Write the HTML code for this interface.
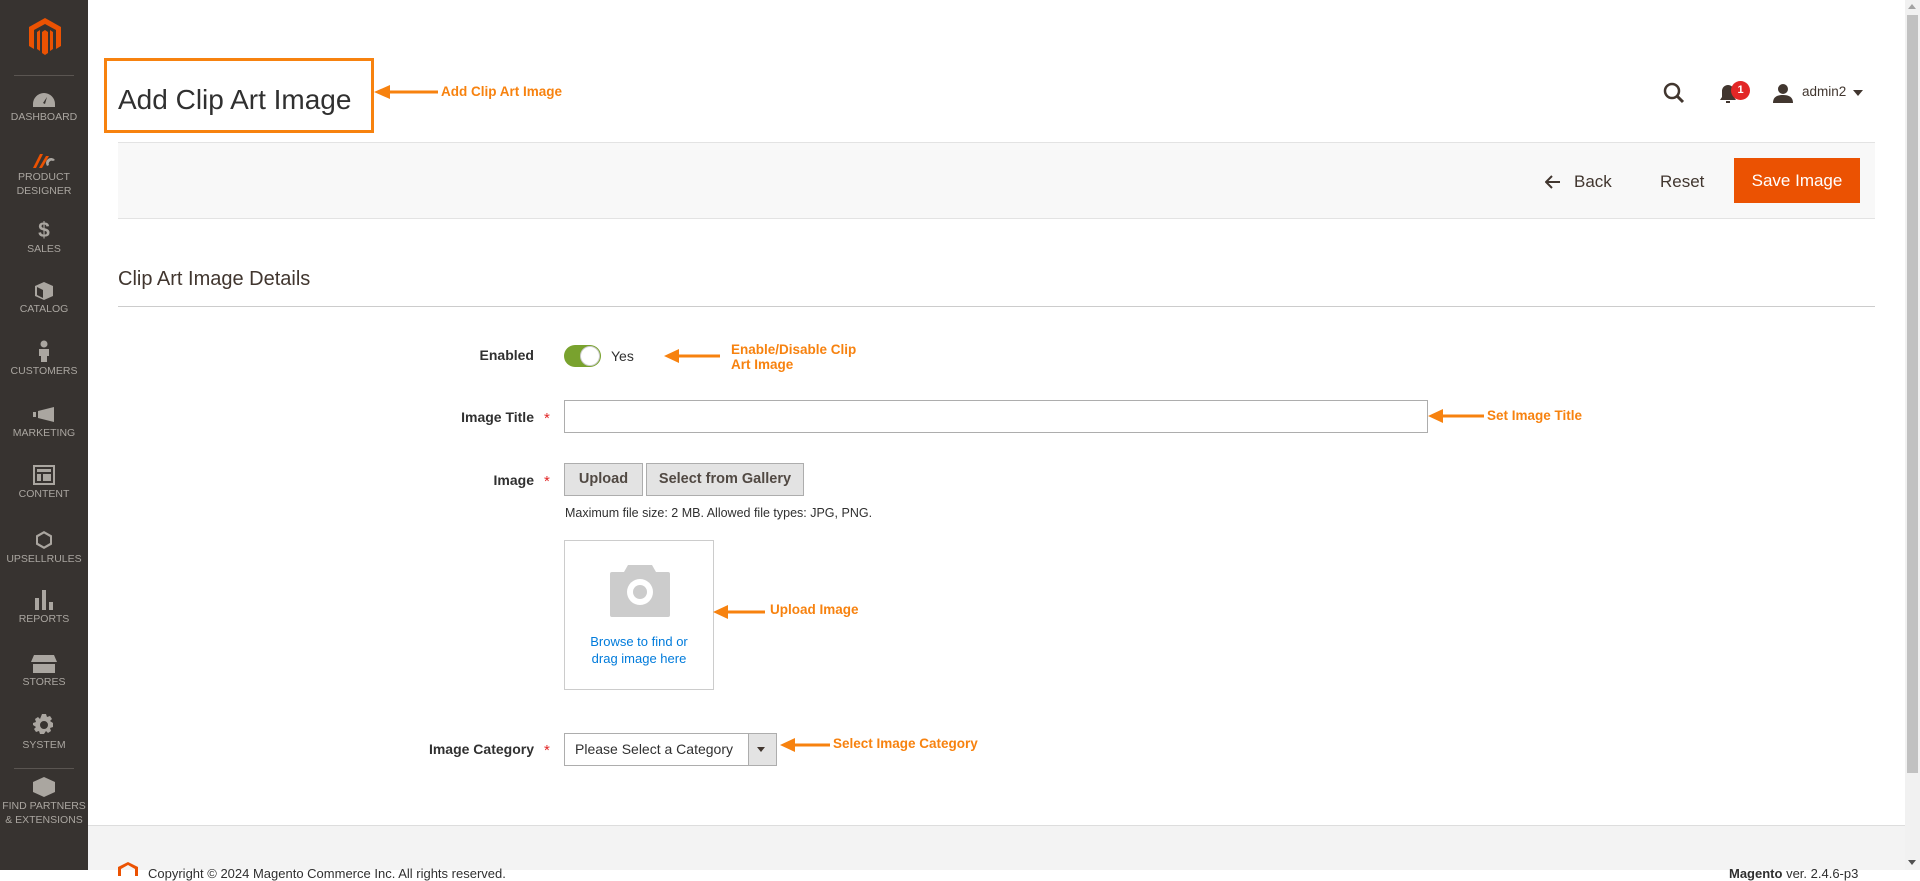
<!DOCTYPE html>
<html><head><meta charset="utf-8"><style>
*{box-sizing:border-box;margin:0;padding:0}
body{width:1920px;height:870px;overflow:hidden;background:#fff;font-family:"Liberation Sans",sans-serif;color:#303030;position:relative}
.abs{position:absolute}
#side{left:0;top:0;width:88px;height:870px;background:#373330}
.mi{position:absolute;left:0;width:88px;text-align:center;color:#aaa6a0;font-size:10.5px;line-height:14px}
.sep{position:absolute;left:14px;width:60px;height:1px;background:#5a5551}
.ic{display:block;margin:0 auto 2px;fill:#aaa6a0}
.lbl{position:absolute;font-size:14px;font-weight:bold;color:#303030;text-align:right;width:300px;left:234px}
.star{position:absolute;left:544px;color:#e22626;font-size:15px}
.ann{position:absolute;color:#f7820f;font-weight:bold;font-size:13.5px;line-height:15px}
.btn{position:absolute;background:#e3e3e3;border:1px solid #adadad;font-size:14.5px;font-weight:bold;color:#514943;text-align:center;line-height:31px}
</style></head><body>
<div id="side" class="abs">
 <svg class="abs" style="left:29px;top:18px" width="32" height="38" viewBox="0 0 32 38"><path fill="#eb5202" d="M16 0 L32 9 V28 L27 31 V12 L16 6 L5 12 V31 L0 28 V9 Z M13 14 L16 12 L19 14 V35 L16 37 L13 35 Z M8 14 L11 12 V33 L8 31Z M24 14 L21 12 V33 L24 31Z"/></svg>
 <div class="sep" style="top:75px"></div>
 <div class="mi" style="top:92px"><svg class="ic" width="24" height="16" viewBox="0 0 24 16"><path d="M12 1A11 11 0 0 0 1 12v3h22v-3A11 11 0 0 0 12 1zm1 11l-2-1 4-6z"/></svg>DASHBOARD</div>
 <div class="mi" style="top:152px"><svg class="ic" width="26" height="16" viewBox="0 0 26 16"><path fill="#eb5202" d="M2 16L9 2h3L5 16zM8 16l7-12h3l-7 12z"/><path fill="#aaa6a0" d="M16 14a5 5 0 0 1 8-6l-2 1a3 3 0 0 0-4 4z"/></svg>PRODUCT<br>DESIGNER</div>
 <div class="mi" style="top:220px"><div style="font-size:21px;font-weight:bold;line-height:22px;color:#aaa6a0">$</div>SALES</div>
 <div class="mi" style="top:282px"><svg class="ic" width="20" height="18" viewBox="0 0 20 18"><path d="M10 0l9 4v10l-9 4-9-4V4zM3 5v8l6 3V8z"/></svg>CATALOG</div>
 <div class="mi" style="top:340px"><svg class="ic" width="14" height="22" viewBox="0 0 14 22"><circle cx="7" cy="4" r="3.5"/><path d="M2 9h10v7H10v6H4v-6H2z"/></svg>CUSTOMERS</div>
 <div class="mi" style="top:406px"><svg class="ic" width="24" height="18" viewBox="0 0 24 18"><path d="M1 6h3v5H1zM6 5l16-4v15L6 12z"/></svg>MARKETING</div>
 <div class="mi" style="top:465px"><svg class="ic" width="22" height="20" viewBox="0 0 22 20"><path d="M0 0h22v20H0zM2 2v16h18V2zM4 4h14v3H4zM4 9h4v7H4zM10 9h8v7h-8z"/></svg>CONTENT</div>
 <div class="mi" style="top:530px"><svg class="ic" width="20" height="20" viewBox="0 0 20 20"><path d="M10 1l8 4.5v9L10 19l-8-4.5v-9zM10 3.5L4 7v6l6 3.5 6-3.5V7z"/></svg>UPSELLRULES</div>
 <div class="mi" style="top:590px"><svg class="ic" width="22" height="20" viewBox="0 0 22 20"><path d="M2 8h4v12H2zM9 0h4v20H9zM16 12h4v8h-4z"/></svg>REPORTS</div>
 <div class="mi" style="top:655px"><svg class="ic" width="26" height="18" viewBox="0 0 26 18"><path d="M3 0h20l3 7H0zM2 9h22v9H2z"/></svg>STORES</div>
 <div class="mi" style="top:714px"><svg class="ic" width="22" height="22" viewBox="0 0 22 22"><path d="M9 0h4l1 3 3-1 2 3-2 2 3 2v4l-3 1 1 3-3 2-2-2-2 3h-4l-1-3-3 1-2-3 2-2-3-2V9l3-1-1-3 3-2 2 2zM11 7a4 4 0 1 0 0 8 4 4 0 0 0 0-8z"/></svg>SYSTEM</div>
 <div class="sep" style="top:768px"></div>
 <div class="mi" style="top:777px"><svg class="ic" width="24" height="20" viewBox="0 0 24 20"><path d="M12 0l11 5v10l-11 5-11-5V5z"/></svg>FIND PARTNERS<br>&amp; EXTENSIONS</div>
</div>

<div class="abs" style="left:104px;top:58px;width:270px;height:75px;border:3px solid #f7820f"></div>
<div class="abs" style="left:118px;top:84px;font-size:28px;color:#303030">Add Clip Art Image</div>
<svg class="abs" style="left:374px;top:84px" width="64" height="16"><path d="M0 8L16 1V15Z" fill="#f7820f"/><rect x="14" y="6.5" width="50" height="3" fill="#f7820f"/></svg>
<div class="ann" style="left:441px;top:84px">Add Clip Art Image</div>

<svg class="abs" style="left:1663px;top:82px" width="22" height="22" viewBox="0 0 22 22"><circle cx="9" cy="9" r="7" fill="none" stroke="#41362f" stroke-width="2.5"/><path d="M14 14l6 6" stroke="#41362f" stroke-width="3"/></svg>
<svg class="abs" style="left:1718px;top:84px" width="20" height="20" viewBox="0 0 20 20"><path d="M10 1a6 6 0 0 0-6 6v6l-2 3h16l-2-3V7a6 6 0 0 0-6-6zM8 17h4v2H8z" fill="#41362f"/></svg>
<div class="abs" style="left:1731px;top:81px;width:19px;height:19px;border-radius:50%;background:#e22626;color:#fff;font-size:11px;font-weight:bold;text-align:center;line-height:19px">1</div>
<svg class="abs" style="left:1773px;top:83px" width="20" height="20" viewBox="0 0 20 20"><circle cx="10" cy="6" r="5" fill="#41362f"/><path d="M0 20c0-6 4-8 10-8s10 2 10 8z" fill="#41362f"/></svg>
<div class="abs" style="left:1802px;top:84px;font-size:13.5px;color:#41362f">admin2</div>
<div class="abs" style="left:1853px;top:90px;border:5px solid transparent;border-top:6px solid #41362f"></div>

<div class="abs" style="left:118px;top:142px;width:1757px;height:77px;background:#f8f8f8;border-top:1px solid #e3e3e3;border-bottom:1px solid #e3e3e3"></div>
<svg class="abs" style="left:1545px;top:175px" width="16" height="14" viewBox="0 0 16 14"><path d="M7 1L1 7l6 6M1 7h14" fill="none" stroke="#41362f" stroke-width="2"/></svg>
<div class="abs" style="left:1574px;top:172px;font-size:17px;color:#41362f">Back</div>
<div class="abs" style="left:1660px;top:172px;font-size:17px;color:#41362f">Reset</div>
<div class="abs" style="left:1734px;top:158px;width:126px;height:45px;background:#eb5202;color:#fff;font-size:17px;text-align:center;line-height:45px">Save Image</div>

<div class="abs" style="left:118px;top:268px;font-size:20px;color:#41362f">Clip Art Image Details</div>
<div class="abs" style="left:118px;top:306px;width:1757px;height:1px;background:#ccc"></div>

<div class="lbl" style="top:347px">Enabled</div>
<div class="abs" style="left:564px;top:345px;width:37px;height:22px;border-radius:11px;background:#79a22e"></div>
<div class="abs" style="left:580px;top:346px;width:20px;height:20px;border-radius:50%;background:#fff;border:1px solid #ccc"></div>
<div class="abs" style="left:611px;top:348px;font-size:14px">Yes</div>
<svg class="abs" style="left:664px;top:348px" width="56" height="16"><path d="M0 8L15 1V15Z" fill="#f7820f"/><rect x="13" y="6.5" width="43" height="3" fill="#f7820f"/></svg>
<div class="ann" style="left:731px;top:342px">Enable/Disable Clip<br>Art Image</div>

<div class="lbl" style="top:409px">Image Title</div><div class="star" style="top:410px">*</div>
<div class="abs" style="left:564px;top:400px;width:864px;height:33px;border:1px solid #adadad"></div>
<svg class="abs" style="left:1428px;top:408px" width="56" height="16"><path d="M0 8L15 1V15Z" fill="#f7820f"/><rect x="13" y="6.5" width="43" height="3" fill="#f7820f"/></svg>
<div class="ann" style="left:1487px;top:408px">Set Image Title</div>

<div class="lbl" style="top:472px">Image</div><div class="star" style="top:473px">*</div>
<div class="btn" style="left:564px;top:463px;width:79px;height:33px">Upload</div>
<div class="btn" style="left:646px;top:463px;width:158px;height:33px">Select from Gallery</div>
<div class="abs" style="left:565px;top:506px;font-size:12.5px;color:#303030">Maximum file size: 2 MB. Allowed file types: JPG, PNG.</div>
<div class="abs" style="left:564px;top:540px;width:150px;height:150px;border:1px solid #ccc"></div>
<svg class="abs" style="left:610px;top:565px" width="60" height="52" viewBox="0 0 60 52"><path d="M18 0h24l4 7h12a2 2 0 0 1 2 2v41a2 2 0 0 1-2 2H2a2 2 0 0 1-2-2V9a2 2 0 0 1 2-2h12z" fill="#ccc"/><circle cx="30" cy="27" r="13" fill="#fff"/><circle cx="30" cy="27" r="7" fill="#ccc"/></svg>
<div class="abs" style="left:564px;top:633px;width:150px;text-align:center;color:#007bdb;font-size:13px;line-height:17px">Browse to find or<br>drag image here</div>
<svg class="abs" style="left:713px;top:604px" width="52" height="16"><path d="M0 8L15 1V15Z" fill="#f7820f"/><rect x="13" y="6.5" width="39" height="3" fill="#f7820f"/></svg>
<div class="ann" style="left:770px;top:602px">Upload Image</div>

<div class="lbl" style="top:741px">Image Category</div><div class="star" style="top:742px">*</div>
<div class="abs" style="left:564px;top:733px;width:213px;height:33px;border:1px solid #adadad"></div>
<div class="abs" style="left:748px;top:734px;width:28px;height:31px;background:#e3e3e3;border-left:1px solid #adadad"></div>
<div class="abs" style="left:757px;top:747px;border:4px solid transparent;border-top:5px solid #41362f"></div>
<div class="abs" style="left:575px;top:741px;font-size:14px">Please Select a Category</div>
<svg class="abs" style="left:780px;top:737px" width="50" height="16"><path d="M0 8L15 1V15Z" fill="#f7820f"/><rect x="13" y="6.5" width="37" height="3" fill="#f7820f"/></svg>
<div class="ann" style="left:833px;top:736px">Select Image Category</div>

<div class="abs" style="left:88px;top:825px;width:1817px;height:45px;background:#f3f3f3;border-top:1px solid #ddd"></div>
<svg class="abs" style="left:118px;top:862px" width="20" height="14" viewBox="0 0 20 14"><path d="M10 0l10 5v9h-3V7l-7-4-7 4v7H0V5z" fill="#eb5202"/></svg>
<div class="abs" style="left:148px;top:866px;font-size:13px;color:#303030">Copyright © 2024 Magento Commerce Inc. All rights reserved.</div>
<div class="abs" style="left:1729px;top:866px;font-size:13px;color:#303030"><b>Magento</b> ver. 2.4.6-p3</div>

<div class="abs" style="left:1905px;top:0;width:15px;height:870px;background:#f1f1f1"></div>
<div class="abs" style="left:1907px;top:15px;width:11px;height:758px;background:#c1c1c1"></div>
<div class="abs" style="left:1908px;top:4px;border:4px solid transparent;border-bottom:5px solid #a3a3a3;border-top:0"></div>
<div class="abs" style="left:1908px;top:860px;border:4px solid transparent;border-top:5px solid #505050;border-bottom:0"></div>
</body></html>
